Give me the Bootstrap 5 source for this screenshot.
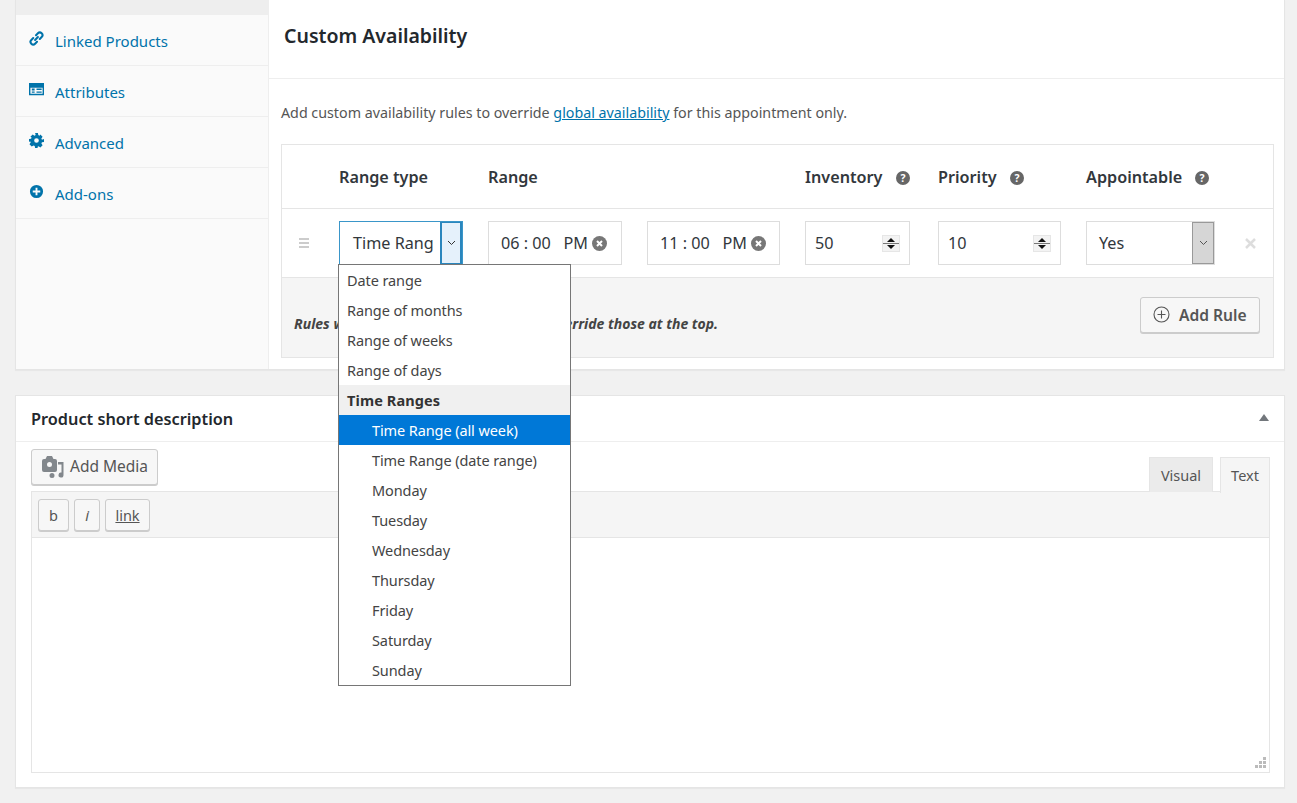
<!DOCTYPE html>
<html lang="en"><head><meta charset="utf-8"><title>Custom Availability</title>
<link href="https://cdn.jsdelivr.net/npm/bootstrap@5.3.0/dist/css/bootstrap.min.css" rel="stylesheet">
<style>
html,body{height:803px;overflow:hidden}
body{background:#f1f1f1;font-family:"Noto Sans","Open Sans",sans-serif;font-size:14px;color:#444}
.wrap{padding:0 12px 0 15px}
.box{background:#fff;border:1px solid #e5e5e5;border-top:0;box-shadow:0 1px 1px rgba(0,0,0,.04)}
.box-a{height:370px;margin-bottom:25px}
.side{width:253px;flex:none;background:#fafafa;border-right:1px solid #eee}
.side-top{height:15px;background:#eee}
.side-item{height:51px;border-bottom:1px solid #eee;color:#0073aa;font-size:15px;padding:2px 0 0 13px;gap:11px;text-decoration:none}
.side-item svg{width:15px;height:15px;margin-top:-5px;flex:none}
.main{flex:1;min-width:0}
.main-head{height:79px;border-bottom:1px solid #eee;padding:24px 0 0 15px;font-size:19.5px;font-weight:600;color:#23282d;line-height:24px}
.intro{padding:24px 0 0 12px;line-height:20px;color:#555;height:65px;font-size:14.27px}
.intro a{color:#0073aa}
.rules{width:993px;margin-left:12px;border:1px solid #e5e5e5;table-layout:fixed;border-collapse:separate;border-spacing:0;color:#32373c}
.rules th{height:64px;font-weight:600;font-size:16.2px;color:#32373c;border-bottom:1px solid #e5e5e5;vertical-align:middle;padding:2px 0 0;white-space:nowrap}
.rules td{height:69px;border-bottom:1px solid #e5e5e5;padding:0;vertical-align:middle;position:relative}
.rules .foot{height:79px;background:#f5f5f5;border-bottom:0}
.foot-in{padding:0 13px 0 12px}
.help{width:14px;height:14px;margin-left:9px;vertical-align:-2px}
.fld{height:44px;border:1px solid #ddd;background:#fff;font-size:16.2px;color:#32373c;padding:0 0 0 12px;white-space:nowrap;overflow:hidden}
.f-type{width:124px;border-color:#3a96c9;padding-left:13px}
.f-r1{width:134px}.f-r2{width:133px}.f-inv{width:105px;padding-left:9px}.f-pri{width:123px;padding-left:9px}.f-app{width:129px;padding-left:12px}
.arrow{width:22px;height:42px;flex:none;margin-left:auto;border:1px solid #999;background:#d6d6d6}
.f-type .arrow{background:#e5f1fb;border:2px solid #2a86bd;height:44px;width:22px;margin-top:-1px;margin-bottom:-1px}
.clr{width:15px;height:15px;margin-left:4px;flex:none}
.spin{width:18px;height:17px;flex:none;margin:0 9px 0 auto}
.drag{width:10px;height:10px;margin-left:17px;display:block}
.x-rm{width:11px;height:11px;display:block;margin-left:1px}
.picker{position:absolute;left:-1px;top:55px;width:233px;height:422px;background:#fff;border:1px solid #767676;z-index:5;font-size:14.5px;color:#444;letter-spacing:-.1px}
.opt{height:30px;line-height:30px;padding-left:8px;white-space:nowrap}
.opt.in{padding-left:33px}
.opt.grp{background:#f0f0f0;font-weight:700;color:#333;letter-spacing:.1px}
.opt.sel{background:#0078d7;color:#fff}
.note{font-style:italic;font-weight:700;font-size:14px;color:#444;padding-top:35px}
.add-rule{width:120px;height:36px;margin-top:19px;background:#f7f7f7;border:1px solid #ccc;border-radius:3px;box-shadow:0 1px 0 #ccc;color:#555;font-size:15.6px;font-weight:600;gap:9px;padding:1px 0 0 12px}
.add-rule svg{width:17px;height:17px;margin-top:-2px}
.box-b{height:393px;border-top:1px solid #e5e5e5}
.b-head{height:46px;border-bottom:1px solid #eee;padding:2px 15px 0;font-size:16.3px;font-weight:600;color:#23282d}
.tri{width:0;height:0;border:5.5px solid transparent;border-bottom:7px solid #72777c;border-top:0;margin-top:-4px}
.b-body{padding:7px 14px 0 15px}
.tools{height:49px;position:relative}
.media{width:127px;height:36px;background:#f7f7f7;border:1px solid #ccc;border-radius:3px;box-shadow:0 1px 0 #ccc;color:#555;font-size:15.5px;padding:0 0 0 9px;gap:6px}
.tab{position:absolute;top:8px;height:35px;font-size:14.5px;color:#555;text-align:center;line-height:35px}
.tab-v{left:1118px;width:64px;background:#ebebeb;border:1px solid #e5e5e5;border-bottom:0}
.tab-t{left:1189px;width:50px;background:#f5f5f5;border:1px solid #e5e5e5;border-bottom:0;height:36px;z-index:2}
.bar{height:47px;margin-top:-7px;background:#f5f5f5;border:1px solid #e5e5e5;padding:0 6px;gap:5px}
.tb{height:32px;background:#f7f7f7;border:1px solid #ccc;border-radius:3px;box-shadow:0 1px 0 #ccc;font-size:14.5px;color:#555;line-height:30px;text-align:center}
.tb-b{width:31px}.tb-i{width:26px}.tb-l{width:45px}
.ed{height:235px;background:#fff;border:1px solid #e5e5e5;border-top:0;position:relative}
.grip{position:absolute;right:2px;bottom:2px;width:13px;height:13px}
</style></head><body>
<div class="wrap">
<div class="box box-a d-flex">
 <div class="side">
  <div class="side-top"></div>
  <a class="side-item d-flex align-items-center" href="#"><svg viewBox="0 0 16 16" fill="none" stroke="#0073aa" stroke-width="2.2" stroke-linecap="round"><path d="M6.500 9.500 9.500 6.500"/><path d="M7.500 4.500 9.500 2.500a2.800 2.800 0 0 1 4 4l-2 2"/><path d="M8.500 11.500 6.500 13.500a2.800 2.800 0 0 1-4-4l2-2"/></svg>Linked Products</a>
  <a class="side-item d-flex align-items-center" href="#"><svg viewBox="0 0 16 16"><path fill="#0073aa" fill-rule="evenodd" d="M0 1h16v13H0zM1.500 6v6.500h13V6zM3 7h3v2H3zm0 3h3v1.500H3zm5-3h5.500v1.500H8zm0 3h5.500v1.500H8z"/></svg>Attributes</a>
  <a class="side-item d-flex align-items-center" href="#"><svg viewBox="0 0 16 16"><path fill="#0073aa" fill-rule="evenodd" d="M6.500 0h3l.4 2.200 1.300.6L12.100 1.500l2.400 2.400-1.300 1.900.6 1.300L16 6.500v3l-2.200.4-.6 1.300 1.300 1.900-2.400 2.400-1.900-1.300-1.300.6L9.500 16h-3l-.4-2.200-1.300-.6-1.900 1.300-2.400-2.400 1.300-1.900-.6-1.300L0 9.500v-3l2.200-.4.6-1.300L1.500 3.900l2.400-2.400 1.900 1.300 1.300-.6zM8 5.500a2.500 2.500 0 1 0 0 5 2.500 2.500 0 0 0 0-5z"/></svg>Advanced</a>
  <a class="side-item d-flex align-items-center" href="#"><svg viewBox="0 0 16 16"><path fill="#0073aa" fill-rule="evenodd" d="M8 1a7 7 0 1 1 0 14A7 7 0 0 1 8 1zM7 4v3H4v2h3v3h2V9h3V7H9V4z"/></svg>Add-ons</a>
 </div>
 <div class="main">
  <div class="main-head">Custom Availability</div>
  <div class="intro">Add custom availability rules to override <a href="#">global availability</a> for this appointment only.</div>
  <table class="rules">
   <colgroup><col style="width:57px"><col style="width:149px"><col style="width:159px"><col style="width:158px"><col style="width:133px"><col style="width:148px"><col style="width:158px"><col style="width:29px"></colgroup>
   <tr>
    <th></th><th>Range type</th><th colspan="2">Range</th>
    <th>Inventory <svg class="help" viewBox="0 0 14 14"><circle cx="7" cy="7" r="7" fill="#666"/><text x="7" y="10.800" font-size="10.500" font-weight="700" text-anchor="middle" fill="#fff">?</text></svg></th>
    <th>Priority <svg class="help" viewBox="0 0 14 14"><circle cx="7" cy="7" r="7" fill="#666"/><text x="7" y="10.800" font-size="10.500" font-weight="700" text-anchor="middle" fill="#fff">?</text></svg></th>
    <th>Appointable <svg class="help" viewBox="0 0 14 14"><circle cx="7" cy="7" r="7" fill="#666"/><text x="7" y="10.800" font-size="10.500" font-weight="700" text-anchor="middle" fill="#fff">?</text></svg></th>
    <th></th>
   </tr>
   <tr>
    <td><svg class="drag" viewBox="0 0 10 10"><path d="M0 1h10M0 5h10M0 9h10" stroke="#ccc" stroke-width="2"/></svg></td>
    <td>
     <div class="fld f-type d-flex align-items-center">Time Rang<span class="arrow d-flex align-items-center justify-content-center"><svg width="9" height="6" viewBox="0 0 9 6"><path d="M1 1l3.500 3.500L8 1" fill="none" stroke="#333" stroke-width="1"/></svg></span></div>
     <div class="picker">
      <div class="opt">Date range</div><div class="opt">Range of months</div><div class="opt">Range of weeks</div><div class="opt">Range of days</div>
      <div class="opt grp">Time Ranges</div>
      <div class="opt in sel">Time Range (all week)</div><div class="opt in">Time Range (date range)</div><div class="opt in">Monday</div><div class="opt in">Tuesday</div><div class="opt in">Wednesday</div><div class="opt in">Thursday</div><div class="opt in">Friday</div><div class="opt in">Saturday</div><div class="opt in">Sunday</div>
     </div>
    </td>
    <td><div class="fld f-r1 d-flex align-items-center">06 : 00 &nbsp; PM<svg class="clr" viewBox="0 0 15 15"><circle cx="7.500" cy="7.500" r="7.500" fill="#777"/><path d="M5 5l5 5M10 5l-5 5" stroke="#fff" stroke-width="2"/></svg></div></td>
    <td><div class="fld f-r2 d-flex align-items-center">11 : 00 &nbsp; PM<svg class="clr" viewBox="0 0 15 15"><circle cx="7.500" cy="7.500" r="7.500" fill="#777"/><path d="M5 5l5 5M10 5l-5 5" stroke="#fff" stroke-width="2"/></svg></div></td>
    <td><div class="fld f-inv d-flex align-items-center">50<svg class="spin" viewBox="0 0 18 17"><rect width="18" height="17" fill="#e6e6e6"/><rect x="1" y="1" width="16" height="7" fill="#f3f3f3"/><rect x="1" y="9" width="16" height="7" fill="#f3f3f3"/><path d="M1 8.500h16" stroke="#777"/><path d="M9 3l4 4H5zM9 14l-4-4h8z" fill="#111"/></svg></div></td>
    <td><div class="fld f-pri d-flex align-items-center">10<svg class="spin" viewBox="0 0 18 17"><rect width="18" height="17" fill="#e6e6e6"/><rect x="1" y="1" width="16" height="7" fill="#f3f3f3"/><rect x="1" y="9" width="16" height="7" fill="#f3f3f3"/><path d="M1 8.500h16" stroke="#777"/><path d="M9 3l4 4H5zM9 14l-4-4h8z" fill="#111"/></svg></div></td>
    <td><div class="fld f-app d-flex align-items-center">Yes<span class="arrow d-flex align-items-center justify-content-center"><svg width="9" height="6" viewBox="0 0 9 6"><path d="M1 1l3.500 3.500L8 1" fill="none" stroke="#555" stroke-width="1"/></svg></span></div></td>
    <td><svg class="x-rm" viewBox="0 0 11 11"><path d="M1 1l9 9M10 1l-9 9" stroke="#ddd" stroke-width="2.500"/></svg></td>
   </tr>
   <tr><td class="foot align-top" colspan="8"><div class="foot-in d-flex align-items-start justify-content-between">
    <span class="note">Rules with lower priority numbers will override those at the top.</span>
    <span class="add-rule d-flex align-items-center"><svg viewBox="0 0 17 17"><circle cx="8.500" cy="8.500" r="7.500" fill="none" stroke="#555" stroke-width="1.100"/><path d="M8.500 4.500v8M4.500 8.500h8" stroke="#555" stroke-width="1.100"/></svg>Add Rule</span>
   </div></td></tr>
  </table>
 </div>
</div>
<div class="box box-b">
 <div class="b-head d-flex align-items-center justify-content-between">Product short description<span class="tri"></span></div>
 <div class="b-body">
  <div class="tools">
   <div class="media d-flex align-items-center"><svg width="23" height="22" viewBox="0 0 23 22"><path fill="#82878c" fill-rule="evenodd" d="M1 5a2 2 0 0 1 2-2h1.500L6 0h5l1.500 3H14a2 2 0 0 1 2 2v9a2 2 0 0 1-2 2H3a2 2 0 0 1-2-2zM8.500 6a2.500 2.500 0 1 0 0 5 2.500 2.500 0 0 0 0-5z"/><path fill="#82878c" d="M17 6h5.500v13a2.500 2.500 0 1 1-2-2.400V8.500H17zM11 17a2.500 2.500 0 1 1 0 5 2.500 2.500 0 0 1 0-5z"/></svg>Add Media</div>
   <div class="tab tab-v">Visual</div><div class="tab tab-t">Text</div>
  </div>
  <div class="bar d-flex align-items-center"><span class="tb tb-b">b</span><span class="tb tb-i fst-italic">i</span><span class="tb tb-l text-decoration-underline">link</span></div>
  <div class="ed"><svg class="grip" viewBox="0 0 13 13"><path fill="#bbb" d="M9 0h3v3H9zM5 4h3v3H5zM9 4h3v3H9zM1 8h3v3H1zM5 8h3v3H5zM9 8h3v3H9z"/></svg></div>
 </div>
</div>
</div>
</body></html>
